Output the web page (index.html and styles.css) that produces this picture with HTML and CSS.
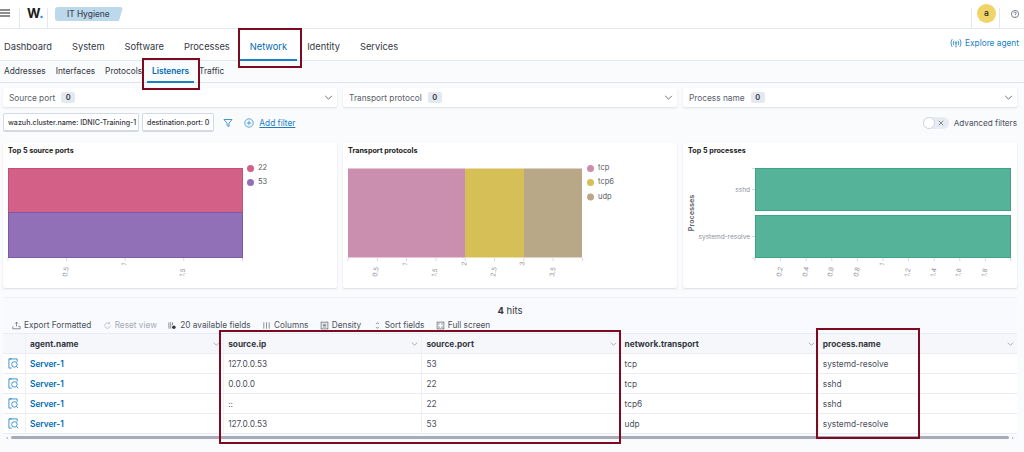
FILE: index.html
```html
<!DOCTYPE html>
<html lang="en">
<head>
<meta charset="utf-8">
<title>IT Hygiene - Listeners</title>
<link rel="stylesheet" href="styles.css">
</head>
<body>
<header class="topbar">
  <div class="menu-cell"><svg class="icon-menu" viewBox="0 0 10 8"><path d="M0 1h10M0 4h10M0 7h10"/></svg></div>
  <div class="logo-cell"><span class="logo">W<span class="logo-dot">.</span></span></div>
  <div class="crumb-cell"><span class="crumb">IT Hygiene</span></div>
  <div class="avatar-cell"><span class="avatar">a</span></div>
  <div class="help-cell"><svg class="icon-help" viewBox="0 0 10 10"><circle cx="5" cy="5" r="3.6"/><path d="M3.9 4.2c0-1.5 2.3-1.5 2.3-.1 0 1-1.1 1-1.1 2M5.1 6.9v.5"/></svg></div>
</header>

<nav class="tabs">
  <a class="tab">Dashboard</a>
  <a class="tab">System</a>
  <a class="tab">Software</a>
  <a class="tab">Processes</a>
  <a class="tab tab-active">Network</a>
  <a class="tab">Identity</a>
  <a class="tab">Services</a>
  <a class="explore"><svg class="icon-explore" viewBox="0 0 12 10"><path d="M2.2 1.2c-1.5 2-1.5 5.6 0 7.6M9.8 1.2c1.5 2 1.5 5.6 0 7.6M3.9 2.7c-.8 1.2-.8 3.4 0 4.6M8.1 2.7c.8 1.2.8 3.4 0 4.6M6 5.5v4"/><circle cx="6" cy="4.6" r=".9"/></svg>Explore agent</a>
</nav>

<nav class="subtabs">
  <a class="subtab">Addresses</a>
  <a class="subtab">Interfaces</a>
  <a class="subtab">Protocols</a>
  <a class="subtab subtab-active">Listeners</a>
  <a class="subtab">Traffic</a>
</nav>

<main class="content">
  <section class="selects">
    <div class="select"><span>Source port</span><span class="badge">0</span><svg class="chev" viewBox="0 0 10 6"><path d="M1 1l4 4 4-4"/></svg></div>
    <div class="select"><span>Transport protocol</span><span class="badge">0</span><svg class="chev" viewBox="0 0 10 6"><path d="M1 1l4 4 4-4"/></svg></div>
    <div class="select"><span>Process name</span><span class="badge">0</span><svg class="chev" viewBox="0 0 10 6"><path d="M1 1l4 4 4-4"/></svg></div>
  </section>

  <section class="filters">
    <span class="pill pill-wide">wazuh.cluster.name: IDNIC-Training-1</span>
    <span class="pill">destination.port: 0</span>
    <svg class="icon-funnel" viewBox="0 0 10 10"><path d="M1 1.5h8L6 5.2v3.3L4 7.4V5.2z"/></svg>
    <svg class="icon-plus" viewBox="0 0 10 10"><circle cx="5" cy="5" r="4.2"/><path d="M5 2.8v4.4M2.8 5h4.4"/></svg>
    <a class="add-filter">Add filter</a>
    <span class="switch"><span class="knob"></span><svg class="icon-x" viewBox="0 0 8 8"><path d="M1 1l6 6M7 1L1 7"/></svg></span>
    <span class="adv">Advanced filters</span>
  </section>

  <section class="charts">
    <article class="panel">
      <h3 class="panel-title">Top 5 source ports</h3>
      <svg class="chart" viewBox="0 0 334 131">
        <rect class="bar-pink" x="5.5" y="14.5" width="234" height="44"/>
        <rect class="bar-purple" x="5.5" y="58.5" width="234" height="45"/>
        <path class="tick" d="M5 104v3M63.6 104v3M122.2 104v3M180.8 104v3M239.5 104v3"/>
        <text class="axis" transform="translate(64,123) rotate(-80)">0.5</text>
        <text class="axis" transform="translate(123,112) rotate(-80)">1</text>
        <text class="axis" transform="translate(181,123) rotate(-80)">1.5</text>
        <circle class="dot-pink" cx="247.5" cy="14.5" r="3.5"/>
        <circle class="dot-purple" cx="247.5" cy="28.5" r="3.5"/>
        <text class="legend" x="255" y="16">22</text>
        <text class="legend" x="255" y="30">53</text>
      </svg>
    </article>
    <article class="panel">
      <h3 class="panel-title">Transport protocols</h3>
      <svg class="chart" viewBox="0 0 334 131">
        <rect class="bar-mauve" x="5" y="14.5" width="117" height="89"/>
        <rect class="bar-gold" x="122" y="14.5" width="59" height="89"/>
        <rect class="bar-tan" x="181" y="14.5" width="58" height="89"/>
        <path class="tick" d="M5 104v3M63.6 104v3M122.2 104v3M180.8 104v3M239.5 104v3M34.3 104v3M92.9 104v3M151.5 104v3M210.1 104v3"/>
        <text class="axis" transform="translate(34,123) rotate(-80)">0.5</text>
        <text class="axis" transform="translate(64,112) rotate(-80)">1</text>
        <text class="axis" transform="translate(93,123) rotate(-80)">1.5</text>
        <text class="axis" transform="translate(123,112) rotate(-80)">2</text>
        <text class="axis" transform="translate(152,123) rotate(-80)">2.5</text>
        <text class="axis" transform="translate(181,112) rotate(-80)">3</text>
        <text class="axis" transform="translate(211,123) rotate(-80)">3.5</text>
        <circle class="dot-mauve" cx="247.5" cy="14.5" r="3.5"/>
        <circle class="dot-gold" cx="247.5" cy="28.5" r="3.5"/>
        <circle class="dot-tan" cx="247.5" cy="43" r="3.5"/>
        <text class="legend" x="255" y="16">tcp</text>
        <text class="legend" x="255" y="30">tcp6</text>
        <text class="legend" x="255" y="44.5">udp</text>
      </svg>
    </article>
    <article class="panel">
      <h3 class="panel-title">Top 5 processes</h3>
      <svg class="chart" viewBox="0 0 334 131">
        <rect class="bar-green" x="72.5" y="14.5" width="255" height="42"/>
        <rect class="bar-green" x="72.5" y="61.5" width="255" height="42"/>
        <path class="tick" d="M69 14.5h3M69 35.5h3M69 82.5h3M69 104h3M72 104v3M97.6 104v3M123.2 104v3M148.8 104v3M174.4 104v3M200 104v3M225.6 104v3M251.2 104v3M276.8 104v3M302.4 104v3M327.7 104v3"/>
        <text class="axis axis-end" x="67" y="38">sshd</text>
        <text class="axis axis-end" x="67" y="85">systemd-resolve</text>
        <text class="axis-title" transform="translate(11,59) rotate(-90)">Processes</text>
        <text class="axis" transform="translate(98,123) rotate(-80)">0.2</text>
        <text class="axis" transform="translate(124,123) rotate(-80)">0.4</text>
        <text class="axis" transform="translate(149,123) rotate(-80)">0.6</text>
        <text class="axis" transform="translate(175,123) rotate(-80)">0.8</text>
        <text class="axis" transform="translate(201,112) rotate(-80)">1</text>
        <text class="axis" transform="translate(226,123) rotate(-80)">1.2</text>
        <text class="axis" transform="translate(252,123) rotate(-80)">1.4</text>
        <text class="axis" transform="translate(277,123) rotate(-80)">1.6</text>
        <text class="axis" transform="translate(303,123) rotate(-80)">1.8</text>
      </svg>
    </article>
  </section>

  <section class="results">
    <div class="hits"><b>4</b> hits</div>
    <div class="toolbar">
      <span class="tool"><svg class="tool-icon" viewBox="0 0 10 10"><path d="M5 6V1.5M3.3 3L5 1.3 6.7 3M1 6l-.2 2.6h8.4L9 6H7"/></svg>Export Formatted</span>
      <span class="tool tool-off"><svg class="tool-icon" viewBox="0 0 10 10"><path d="M8 5a3 3 0 1 1-1-2.2M7.3 1v2H5.5"/></svg>Reset view</span>
      <span class="tool"><svg class="tool-icon" viewBox="0 0 10 10"><path d="M1 1.5v7M3 1.5v7M5 1.5v3"/><circle class="tool-solid" cx="6.5" cy="7" r="2"/></svg>20 available fields</span>
      <span class="tool"><svg class="tool-icon" viewBox="0 0 10 10"><path d="M2 1.5v7M5 1.5v7M8 1.5v7"/></svg>Columns</span>
      <span class="tool"><svg class="tool-icon" viewBox="0 0 10 10"><rect x="1.2" y="1.2" width="7.6" height="7.6"/><path d="M3 3.5h4M3 5h4M3 6.7h4"/></svg>Density</span>
      <span class="tool"><svg class="tool-icon" viewBox="0 0 10 10"><path d="M3.5 3.5L5 1.8l1.5 1.7M3.5 6.5L5 8.2l1.5-1.7"/></svg>Sort fields</span>
      <span class="tool"><svg class="tool-icon" viewBox="0 0 10 10"><rect x="1.2" y="1.2" width="7.6" height="7.6"/><path d="M3 4V3h1M6 3h1v1M7 6v1H6M4 7H3V6"/></svg>Full screen</span>
    </div>
    <div class="grid">
      <div class="cell head"></div>
      <div class="cell head">agent.name<svg class="sort" viewBox="0 0 10 6"><path d="M1 1l4 4 4-4"/></svg></div>
      <div class="cell head">source.ip<svg class="sort" viewBox="0 0 10 6"><path d="M1 1l4 4 4-4"/></svg></div>
      <div class="cell head">source.port<svg class="sort" viewBox="0 0 10 6"><path d="M1 1l4 4 4-4"/></svg></div>
      <div class="cell head">network.transport<svg class="sort" viewBox="0 0 10 6"><path d="M1 1l4 4 4-4"/></svg></div>
      <div class="cell head">process.name<svg class="sort" viewBox="0 0 10 6"><path d="M1 1l4 4 4-4"/></svg></div>

      <div class="cell"><svg class="inspect" viewBox="0 0 12 12"><path d="M4 1H1v10h3M1.5 1H10v3"/><circle cx="7" cy="7" r="3"/><path d="M9.2 9.2L11 11"/></svg></div>
      <div class="cell link">Server-1</div><div class="cell">127.0.0.53</div><div class="cell">53</div><div class="cell">tcp</div><div class="cell">systemd-resolve</div>

      <div class="cell"><svg class="inspect" viewBox="0 0 12 12"><path d="M4 1H1v10h3M1.5 1H10v3"/><circle cx="7" cy="7" r="3"/><path d="M9.2 9.2L11 11"/></svg></div>
      <div class="cell link">Server-1</div><div class="cell">0.0.0.0</div><div class="cell">22</div><div class="cell">tcp</div><div class="cell">sshd</div>

      <div class="cell"><svg class="inspect" viewBox="0 0 12 12"><path d="M4 1H1v10h3M1.5 1H10v3"/><circle cx="7" cy="7" r="3"/><path d="M9.2 9.2L11 11"/></svg></div>
      <div class="cell link">Server-1</div><div class="cell">::</div><div class="cell">22</div><div class="cell">tcp6</div><div class="cell">sshd</div>

      <div class="cell"><svg class="inspect" viewBox="0 0 12 12"><path d="M4 1H1v10h3M1.5 1H10v3"/><circle cx="7" cy="7" r="3"/><path d="M9.2 9.2L11 11"/></svg></div>
      <div class="cell link">Server-1</div><div class="cell">127.0.0.53</div><div class="cell">53</div><div class="cell">udp</div><div class="cell">systemd-resolve</div>
    </div>
    <div class="scrollbar"><span class="arrow-left"></span><span class="scroll-thumb"></span><span class="arrow-right"></span></div>
  </section>
</main>

<div class="mark mark-network"></div>
<div class="mark mark-listeners"></div>
<div class="mark mark-source"></div>
<div class="mark mark-process"></div>
</body>
</html>
```

FILE: styles.css
```css
* { box-sizing: border-box; }
html, body { margin: 0; height: 452px; overflow: hidden; }
body {
  position: relative;
  background: #fafbfd;
  color: #343741;
  font-family: Inter, "Liberation Sans", sans-serif;
  font-size: 9px;
}
svg { display: block; flex: none; }
a { display: block; }

/* top bar */
.topbar {
  display: flex;
  height: 29px;
  background: #fff;
  border-bottom: 1px solid #e3e7ef;
}
.menu-cell { width: 20px; height: 20px; margin-top: 8px; padding-top: 1px; border-right: 1px solid #e3e7ef; }
.icon-menu { width: 10px; height: 8px; fill: none; stroke: #1a1c21; stroke-width: 1.1; }
.logo-cell { width: 28px; height: 20px; margin-top: 8px; padding-left: 7px; border-right: 1px solid #e3e7ef; }
.logo { display: block; font-size: 13px; font-weight: 700; color: #1a1c21; line-height: 11px; }
.logo-dot { color: #3d7fdb; }
.crumb-cell { flex: 1; padding: 7px 0 0 7px; }
.crumb {
  display: block;
  width: 68px;
  height: 14px;
  padding-left: 12px;
  line-height: 14px;
  font-size: 8.3px;
  font-weight: 500;
  color: #3f4a58;
  background: #bcd9ec;
  border-radius: 3px;
  clip-path: polygon(0 0, 100% 0, 94% 100%, 0 100%);
}
.avatar-cell { position: relative; width: 29px; height: 20px; margin-top: 8px; border-left: 1px solid #e3e7ef; border-right: 1px solid #e3e7ef; }
.avatar {
  position: absolute;
  left: 5px;
  top: -4px;
  width: 19px;
  height: 19px;
  border-radius: 50%;
  background: #f0d467;
  color: #1a1c21;
  font-size: 8.5px;
  font-weight: 500;
  line-height: 19px;
  text-align: center;
}
.help-cell { width: 24px; padding: 9px 0 0 10px; }
.icon-help { width: 10px; height: 10px; fill: none; stroke: #5c6470; stroke-width: .8; }

/* main tabs */
.tabs {
  display: flex;
  align-items: stretch;
  height: 32px;
  background: #fff;
  border-bottom: 1px solid #e3e7ef;
}
.tab {
  height: 32px;
  padding: 11px 10px 0;
  font-size: 9.3px;
  line-height: 13px;
  color: #343741;
  border-bottom: 2px solid transparent;
}
.tab:first-child { padding-left: 4px; }
.tab-active { color: #006bb4; border-bottom-color: #1b7fc4; }
.explore {
  display: flex;
  align-items: center;
  gap: 3px;
  margin-left: auto;
  margin-top: 1px;
  margin-bottom: 4px;
  padding-right: 5px;
  font-size: 8.3px;
  color: #1b7fc4;
}
.icon-explore { width: 12px; height: 10px; fill: none; stroke: #1b7fc4; stroke-width: .8; }

/* secondary tabs */
.subtabs { display: flex; height: 22px; border-bottom: 1px solid #dfe4ec; }
.subtab {
  height: 22px;
  padding: 4px 5px 0;
  font-size: 8.3px;
  line-height: 12px;
  color: #343741;
}
.subtab:first-child { padding-left: 4px; }
.subtab-active {
  font-weight: 600;
  color: #006bb4;
  border-bottom: 2px solid #1b7fc4;
}

.content { display: flex; flex-direction: column; padding: 5px 7px 0 3px; }

/* selects */
.selects { display: grid; grid-template-columns: repeat(3, 1fr); gap: 6px; }
.select {
  display: flex;
  align-items: center;
  gap: 6px;
  height: 19px;
  padding: 0 4px 0 6px;
  background: #fff;
  border-radius: 2px;
  box-shadow: 0 1px 2px rgba(152, 162, 179, .3);
  font-size: 8.3px;
  color: #5a606b;
}
.badge {
  width: 14px;
  height: 11px;
  line-height: 11px;
  text-align: center;
  font-size: 7.5px;
  font-weight: 600;
  color: #343741;
  background: #e4e9f1;
  border-radius: 2px;
}
.chev { width: 9px; height: 5px; margin-left: auto; fill: none; stroke: #505660; stroke-width: 1; }

/* filter row */
.filters { display: flex; align-items: center; height: 19px; margin-top: 6px; }
.pill {
  height: 19px;
  padding: 0 4px;
  margin-right: 3px;
  line-height: 17px;
  font-size: 7.1px;
  font-weight: 500;
  color: #343741;
  white-space: nowrap;
  background: #fff;
  border: 1px solid #d3dae6;
  border-bottom-width: 2px;
  border-radius: 2px;
}
.pill-wide { width: 136px; }
.icon-funnel { width: 10px; height: 10px; margin-left: 6px; fill: none; stroke: #1b7fc4; stroke-width: .8; }
.icon-plus { width: 10px; height: 10px; margin-left: 11px; fill: none; stroke: #1b7fc4; stroke-width: .7; }
.add-filter { margin-left: 5px; font-size: 8.3px; color: #1b7fc4; text-decoration: underline; }
.switch {
  position: relative;
  width: 26px;
  height: 12px;
  margin-left: auto;
  background: #e8ebf1;
  border-radius: 6px;
}
.knob {
  position: absolute;
  left: 0;
  top: 0;
  width: 12px;
  height: 12px;
  background: #fff;
  border: 1px solid #cfd5df;
  border-radius: 50%;
}
.icon-x { position: absolute; left: 15px; top: 3px; width: 6px; height: 6px; fill: none; stroke: #505660; stroke-width: .9; }
.adv { margin-left: 5px; font-size: 8.2px; color: #4a505b; }

/* chart panels */
.charts { display: grid; grid-template-columns: repeat(3, 1fr); gap: 6px; margin-top: 11px; }
.panel {
  height: 145px;
  background: #fff;
  border-radius: 2px;
  box-shadow: 0 1px 2px rgba(152, 162, 179, .35);
}
.panel-title {
  margin: 0;
  padding: 3px 5px 0;
  height: 11px;
  font-size: 7.2px;
  line-height: 10px;
  font-weight: 700;
  color: #1a1c21;
}
.chart { width: 334px; height: 131px; }
.tick { stroke: #d3dae6; stroke-width: 1; fill: none; }
.axis { font-size: 6.5px; fill: #8b909a; }
.axis-end { text-anchor: end; }
.axis-title { font-size: 7.2px; font-weight: 600; fill: #5a606b; text-anchor: middle; }
.legend { font-size: 7.5px; fill: #555b66; }
.bar-pink { fill: #d36086; stroke: #c84f78; }
.bar-purple { fill: #9170b8; stroke: #7d5aa8; }
.bar-mauve { fill: #ca8eae; }
.bar-gold { fill: #d6bf57; }
.bar-tan { fill: #b9a888; }
.bar-green { fill: #54b399; stroke: #3fa387; }
.dot-pink { fill: #d36086; }
.dot-purple { fill: #9170b8; }
.dot-mauve { fill: #ca8eae; }
.dot-gold { fill: #d6bf57; }
.dot-tan { fill: #b9a888; }

/* results */
.results {
  margin-top: 9px;
  background: #f9fafd;
  border-top: 1px solid #eef0f5;
  border-radius: 2px;
}
.hits { height: 19px; padding-top: 7px; font-size: 9.5px; line-height: 12px; text-align: center; }
.hits b { font-weight: 700; }
.toolbar { display: flex; align-items: center; height: 16px; padding-left: 9px; gap: 11.4px; }
.tool { display: flex; align-items: center; gap: 3px; font-size: 8.25px; color: #4a505b; white-space: nowrap; }
.tool-off { color: #a6abb5; }
.tool-icon { width: 9px; height: 9px; fill: none; stroke: currentColor; stroke-width: .7; }
.tool-solid { fill: #343741; stroke: none; }
.grid {
  display: grid;
  grid-template-columns: 23px repeat(5, 198.2px);
  grid-auto-rows: 20px;
  background: #fff;
  border-top: 1px solid #e9edf3;
}
.cell {
  display: flex;
  align-items: center;
  padding-left: 4px;
  font-size: 8.3px;
  color: #4a505b;
  border-right: 1px solid #eef0f5;
  border-bottom: 1px solid #e9edf3;
}
.cell:nth-child(6n) { border-right: 0; }
.head { font-weight: 700; color: #343741; background: #f5f7fa; justify-content: space-between; padding-right: 3px; }
.link { font-weight: 600; color: #006bb4; }
.sort { width: 7px; height: 4px; fill: none; stroke: #777d88; stroke-width: .9; }
.inspect { width: 11px; height: 11px; margin-left: 1px; fill: none; stroke: #1b7fc4; stroke-width: .9; }
.scrollbar { display: flex; align-items: center; gap: 3px; height: 7px; padding: 2px; }
.scroll-thumb { flex: 1; height: 3px; background: #a9acb4; border-radius: 2px; }
.arrow-left, .arrow-right { width: 0; height: 0; border: 1.5px solid transparent; }
.arrow-left { border-right: 2px solid #a9acb4; }
.arrow-right { border-left: 2px solid #a9acb4; }

/* annotation boxes */
.mark { position: absolute; border: 2px solid #7d0a1e; pointer-events: none; }
.mark-network { left: 238px; top: 28px; width: 64px; height: 40px; }
.mark-listeners { left: 142px; top: 58px; width: 58px; height: 32px; }
.mark-source { left: 219px; top: 330px; width: 402px; height: 114px; }
.mark-process { left: 816px; top: 328px; width: 104px; height: 111px; }
```
